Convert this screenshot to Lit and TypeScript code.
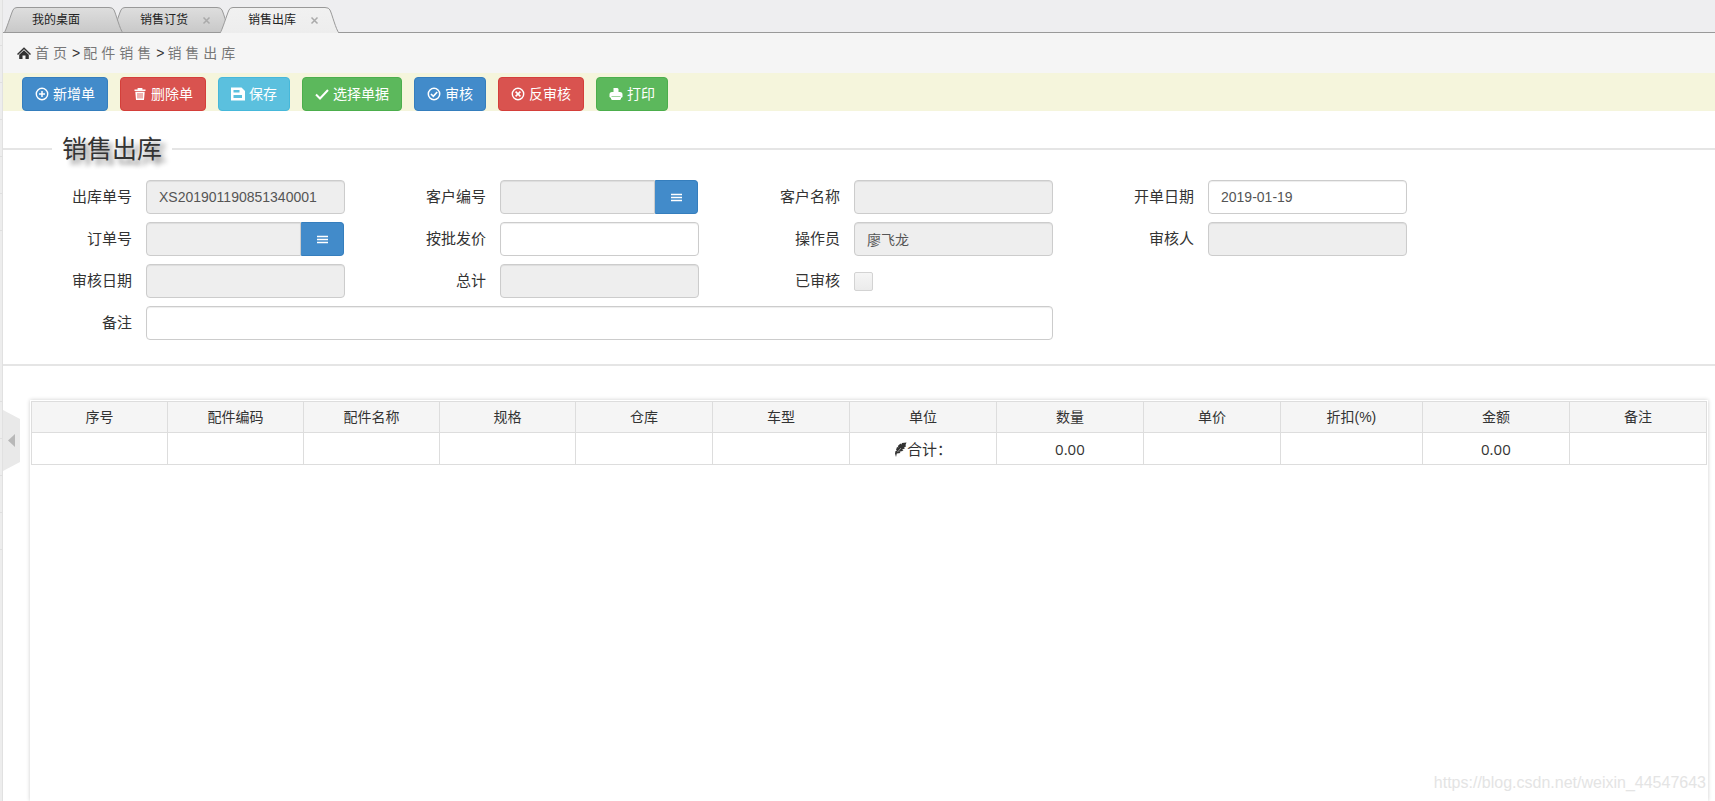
import { LitElement, html, svg, css } from "lit";
import { customElement, state } from "lit/decorators.js";

type Field = { id: string; label: string; value?: string; readonly?: boolean; kind?: "lookup" | "check" | "wide" };

const FIELDS: Field[] = [
  { id: "outNo", label: "出库单号", value: "XS201901190851340001", readonly: true },
  { id: "custNo", label: "客户编号", readonly: true, kind: "lookup" },
  { id: "custName", label: "客户名称", readonly: true },
  { id: "billDate", label: "开单日期", value: "2019-01-19" },
  { id: "orderNo", label: "订单号", readonly: true, kind: "lookup" },
  { id: "wholesale", label: "按批发价" },
  { id: "operator", label: "操作员", value: "廖飞龙", readonly: true },
  { id: "auditor", label: "审核人", readonly: true },
  { id: "auditDate", label: "审核日期", readonly: true },
  { id: "total", label: "总计", readonly: true },
  { id: "audited", label: "已审核", kind: "check" },
  { id: "remark", label: "备注", kind: "wide" },
];

const COLUMNS: [string, number][] = [
  ["序号", 136], ["配件编码", 136], ["配件名称", 136], ["规格", 136], ["仓库", 137], ["车型", 137],
  ["单位", 147], ["数量", 147], ["单价", 137], ["折扣(%)", 142], ["金额", 147], ["备注", 137],
];
const TOTAL_WEIGHT = COLUMNS.reduce((sum, c) => sum + c[1], 0);

const ICONS = {
  plus: svg`<circle cx="7" cy="7" r="5.7" fill="none" stroke="currentColor" stroke-width="1.4"/><path d="M7 4v6M4 7h6" stroke="currentColor" stroke-width="1.5"/>`,
  trash: svg`<path d="M4.6 1h4.8v1.5H12.500V4H1.500V2.500h3.100zM2.300 4.700h9.400l-.7 8.300H3z" fill="currentColor"/><path d="M5 6v5.500M7 6v5.500M9 6v5.500" stroke="#d9534f" stroke-width=".9"/>`,
  save: svg`<path d="M0 .5h10.500L14 4V13.500H0z" fill="currentColor"/><path d="M2.500 3h6v2.500h-6zM2.500 8h8.500v3H2.500z" fill="#5bc0de"/>`,
  check: svg`<path d="M1 7.500l4 4L13 3" fill="none" stroke="currentColor" stroke-width="2"/>`,
  okCircle: svg`<circle cx="7" cy="7" r="5.700" fill="none" stroke="currentColor" stroke-width="1.500"/><path d="M4 7l2.300 2.300L10.200 5" fill="none" stroke="currentColor" stroke-width="1.700"/>`,
  removeCircle: svg`<circle cx="7" cy="7" r="5.700" fill="none" stroke="currentColor" stroke-width="1.400"/><path d="M4.600 4.600l4.800 4.800M9.400 4.600L4.600 9.400" stroke="currentColor" stroke-width="1.600"/>`,
  print: svg`<path d="M4.500 1h4l1 1V5h1.500q2.500 0 2.500 2.500V10L12 11v1l-1 1H3l-1-1v-1L.5 10V7.500Q.5 5 3 5h1.500z" fill="currentColor"/><path d="M2.500 9.500h9" stroke="#5cb85c" stroke-width=".6"/>`,
};

const BUTTONS: { text: string; tone: string; icon: keyof typeof ICONS }[] = [
  { text: "新增单", tone: "primary", icon: "plus" },
  { text: "删除单", tone: "danger", icon: "trash" },
  { text: "保存", tone: "info", icon: "save" },
  { text: "选择单据", tone: "success", icon: "check" },
  { text: "审核", tone: "primary", icon: "okCircle" },
  { text: "反审核", tone: "danger", icon: "removeCircle" },
  { text: "打印", tone: "success", icon: "print" },
];

const TABS = [
  { text: "我的桌面", closable: false },
  { text: "销售订货", closable: true },
  { text: "销售出库", closable: true },
];

@customElement("app-root")
export class AppRoot extends LitElement {
  @state() private active = 2;

  static styles = css`
    :host {
      display: grid;
      grid-template-columns: 3px minmax(0, 1fr);
      min-height: 100vh;
      box-sizing: border-box;
      position: relative;
      background: #fff;
      color: #333;
      font-family: "Liberation Sans", "Noto Sans CJK SC", sans-serif;
      font-size: 14px;
      line-height: 20px;
    }
    * { box-sizing: border-box; }
    button, input { font: inherit; color: inherit; margin: 0; }
    .rail {
      border-right: 1px solid #e1e1e1;
      background:
        repeating-linear-gradient(#ededed 0 36px, #dfdfdf 36px 37px) 0 9px / 100% 222px no-repeat,
        repeating-linear-gradient(#ededed 0 36px, #dfdfdf 36px 37px) 0 365px / 100% 185px no-repeat,
        #ededed;
    }
    .page { display: flex; flex-direction: column; min-width: 0; }
    .handle {
      position: absolute; left: 3px; top: 410px; width: 17px; height: 61px;
      padding: 0; border: 0; background: none; line-height: 0;
    }
    .tabs {
      display: flex; height: 33px; padding: 7px 0 0 1px;
      background: linear-gradient(#999, #999) 0 100% / 100% 1px no-repeat #eeeef0;
    }
    .tab {
      display: grid; width: 120px; height: 26px; margin-right: -12px;
      position: relative; font-size: 12px;
    }
    .tab:first-child { z-index: 1; }
    .tab.active { z-index: 2; }
    .tab > * { grid-area: 1 / 1; }
    .shape { width: 120px; height: 26px; }
    .label {
      display: flex; align-items: center; padding: 0 0 0 28px;
      color: #222; text-decoration: none; position: relative;
    }
    .close {
      position: relative; justify-self: end; align-self: center; margin-right: 21px;
      width: 9px; height: 9px; padding: 0; border: 0; background: none; line-height: 0;
    }
    .crumbs {
      display: flex; align-items: center; height: 40px; padding-left: 14px;
      background: #f5f5f5;
    }
    .crumbs a { color: #777; text-decoration: none; letter-spacing: 4px; }
    .crumbs span { margin: 0 3px 0 1px; }
    .crumbs .home { margin-right: 4px; }
    .toolbar {
      display: flex; flex-wrap: wrap; gap: 12px; padding: 4px 19px 0; background: #f5f5dc;
    }
    .btn {
      display: inline-flex; align-items: center; gap: 4px; height: 34px; padding: 0 12px;
      border: 1px solid; border-radius: 4px; color: #fff; white-space: nowrap;
    }
    .primary { background: #428bca; border-color: #357ebd; }
    .danger { background: #d9534f; border-color: #d43f3a; }
    .info { background: #5bc0de; border-color: #46b8da; }
    .success { background: #5cb85c; border-color: #4cae4c; }
    .btn svg { width: 14px; height: 14px; }
    fieldset { margin: 20px 0 0; padding: 0; border: 0; border-bottom: 2px solid #e5e5e5; min-width: 0; }
    .title { display: flex; align-items: center; width: 100%; padding: 0; font-size: 25px; line-height: 36px; }
    .title::before, .title::after { content: ""; height: 2px; background: #e5e5e5; }
    .title::before { width: 49px; }
    .title::after { flex: 1; }
    .title span { padding: 0 10px; text-shadow: 5px 5px 5px #888; }
    .form {
      display: grid;
      grid-template-columns: repeat(4, minmax(0, 354fr)) minmax(0, 296fr);
      row-gap: 8px;
      padding: 13px 0 24px;
      align-items: center;
    }
    .field { display: flex; align-items: center; height: 34px; padding-right: 12px; gap: 14px; }
    .field > label { width: 129px; flex: none; text-align: right; font-size: 15px; }
    .field.wide { grid-column: 1 / span 3; }
    .field > input[type="text"], .group { flex: 1; min-width: 0; height: 34px; }
    input[type="text"] {
      padding: 6px 12px; border: 1px solid #ccc; border-radius: 4px; background: #fff; color: #555;
      box-shadow: inset 0 1px 1px rgba(0, 0, 0, .075); outline: none; min-width: 0;
    }
    input[readonly] { background: #eee; }
    .group { display: flex; padding-right: 1px; }
    .group input[type="text"] { flex: 1; border-radius: 4px 0 0 4px; }
    .pick {
      display: flex; align-items: center; justify-content: center; flex: none;
      padding: 0; width: 43px; height: 34px; border: 1px solid #357ebd; border-left-color: #428bca;
      border-radius: 0 4px 4px 0; background: #428bca;
    }
    .field input[type="checkbox"] {
      appearance: none; width: 19px; height: 19px; border: 1px solid #d3d3d3; border-radius: 2px;
      background: linear-gradient(#f5f5f5, #ebebeb);
    }
    .sheet {
      flex: 1; margin: 34px 7px 0 27px;
      border: 1px solid transparent; border-bottom: 0; box-shadow: 0 0 4px rgba(0, 0, 0, .2);
    }
    table { width: 100%; border-collapse: collapse; table-layout: fixed; }
    th, td { height: 32px; padding: 0; border: 1px solid #ddd; text-align: center; font-weight: 400; }
    th { height: 31px; background: #f5f5f5; }
    td { font-family: "Open Sans", "Noto Sans CJK SC", sans-serif; font-size: 15px; }
    td svg { vertical-align: -2px; }
    .mark {
      position: absolute; right: 9px; bottom: 8px; font-size: 16px; color: #e4e4e4; pointer-events: none;
    }
  `;

  private renderTab(tab: (typeof TABS)[number], i: number) {
    const on = i === this.active;
    return html`<div class="tab ${on ? "active" : ""}">
      <svg class="shape" viewBox="0 0 120 26" aria-hidden="true">
        <defs><linearGradient id="g" x2="0" y2="1"><stop stop-color="#dedede"/><stop offset="1" stop-color="#c8c8c8"/></linearGradient>
        <linearGradient id="a" x2="0" y2="1"><stop stop-color="#f1f1f1"/><stop offset="1" stop-color="#ededed"/></linearGradient></defs>
        <path d="M0 26C2 24 7 7 9 3Q10 .5 13 .5H105Q109 .5 110 3C112 7 116 23 119 26" fill=${on ? "url(#a)" : "url(#g)"} stroke="#999"/>
        ${on ? "" : svg`<path d="M0 25.500H120" stroke="#999"/>`}
      </svg>
      <a class="label" href="#" @click=${(e: Event) => { e.preventDefault(); this.active = i; }}>${tab.text}</a>
      ${tab.closable ? html`<button class="close" aria-label="关闭"><svg width="9" height="9"><path d="M1.500 1.500l6 6M7.500 1.500l-6 6" stroke="#aaa" stroke-width="1.500"/></svg></button>` : ""}
    </div>`;
  }

  private renderField(f: Field) {
    const input = f.kind === "check"
      ? html`<input type="checkbox" id=${f.id} />`
      : html`<input type="text" id=${f.id} .value=${f.value ?? ""} ?readonly=${f.readonly} />`;
    return html`<div class="field ${f.kind === "wide" ? "wide" : ""}">
      <label for=${f.id}>${f.label}</label>
      ${f.kind === "lookup"
        ? html`<div class="group">${input}<button class="pick" aria-label="选择"><svg width="11" height="9"><path d="M0 1.500h11M0 4.500h11M0 7.500h11" stroke="#fff" stroke-width="1.700"/></svg></button></div>`
        : input}
    </div>${f.id === "audited" ? html`<div></div><div></div>` : f.id === "billDate" || f.id === "auditor" ? html`<div></div>` : ""}`;
  }

  render() {
    return html`
      <div class="rail"></div>
      <main class="page">
        <nav class="tabs">${TABS.map((t, i) => this.renderTab(t, i))}</nav>
        <nav class="crumbs">
          <svg class="home" width="14" height="14" viewBox="0 0 14 14" aria-hidden="true">
            <path d="M0 8L7 1.200 14 8l-1 .9L7 3.200 1 8.900z" fill="#333"/><path d="M2.200 8.800L7 4.300l4.800 4.500V13H8.500V9.500h-3V13H2.200z" fill="#333"/>
          </svg>
          <a href="#">首页</a><span>&gt;</span>
          <a href="#">配件销售</a><span>&gt;</span>
          <a href="#">销售出库</a>
        </nav>
        <div class="toolbar">
          ${BUTTONS.map((b) => html`<button class="btn ${b.tone}"><svg viewBox="0 0 14 14" aria-hidden="true">${ICONS[b.icon]}</svg>${b.text}</button>`)}
        </div>
        <fieldset>
          <legend class="title"><span>销售出库</span></legend>
          <div class="form">${FIELDS.map((f) => this.renderField(f))}</div>
        </fieldset>
        <div class="sheet">
          <table>
            <colgroup>${COLUMNS.map((c) => html`<col style="width:${(c[1] / TOTAL_WEIGHT) * 100}%" />`)}</colgroup>
            <thead><tr>${COLUMNS.map((c) => html`<th scope="col">${c[0]}</th>`)}</tr></thead>
            <tbody><tr>${COLUMNS.map((c) => html`<td>${c[0] === "单位"
              ? html`<svg width="13" height="15" viewBox="0 0 13 15" aria-hidden="true"><path d="M12.500.5L8 1 7.300 2.500 6.500 1.500 3.800 4 4.500 5.500 3 5 2 8 3 9 1.500 9 1 11.500 2 15l.8-3.500L6.500 11 5.500 9.800 9.500 8.800 8 7.800 11 6.300 10 5.300 12 4.500 11.500 3z" fill="#333"/><path d="M3.500 10L7 6" stroke="#fff" stroke-width=".5"/></svg>合计：`
              : c[0] === "数量" || c[0] === "金额" ? "0.00" : ""}</td>`)}</tr></tbody>
          </table>
        </div>
      </main>
      <button class="handle" aria-label="收起菜单"><svg width="17" height="61"><path d="M0 0L17 9V52L0 61z" fill="#e9e9e9"/><path d="M5 30.500L12 24V37z" fill="#b8b8b8"/></svg></button>
      <div class="mark">https://blog.csdn.net/weixin_44547643</div>
    `;
  }
}
